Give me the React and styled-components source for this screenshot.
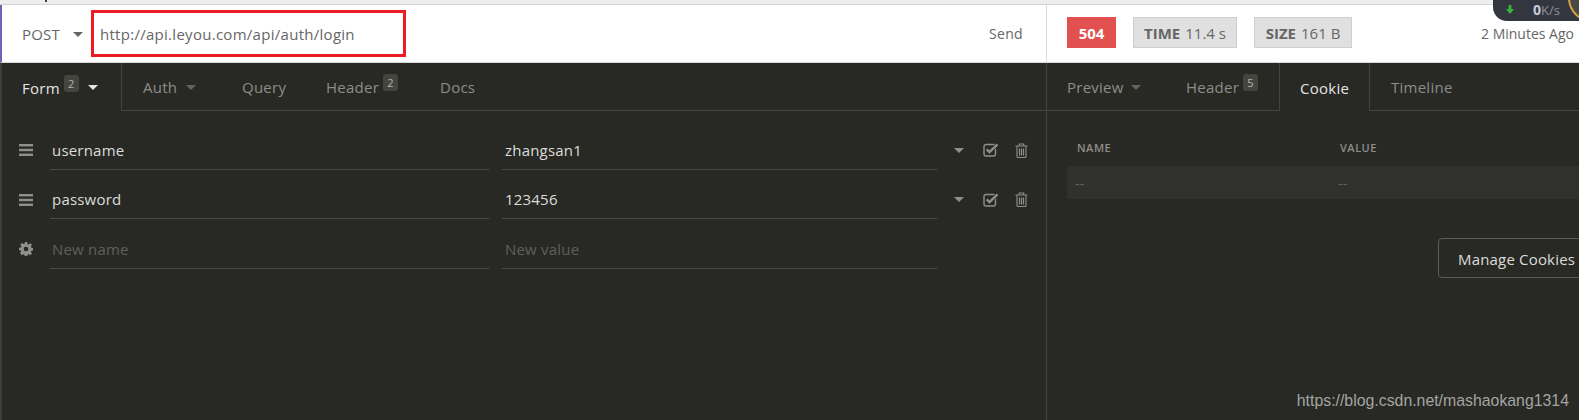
import React from "react";
import styled, { createGlobalStyle } from "styled-components";

const Global = createGlobalStyle`
  html, body { margin: 0; padding: 0; background: #282925; }
  body { font-family: "Open Sans", "Liberation Sans", sans-serif; }
  * { box-sizing: border-box; }
`;
const Page = styled.div`
  position: relative; width: 1579px; height: 420px; overflow: hidden; background: #282925;
  display: flex; flex-direction: column;
`;
const Strip = styled.div`
  height: 5px; flex: none; background: #eeeeee; border-bottom: 1px solid #d4d4d4;
`;
const Speck = styled.div`
  position: absolute; top: 0; left: 45px; width: 2px; height: 2px; background: #3a3a50;
`;
const TopBar = styled.div`
  height: 58px; flex: none; display: flex; background: #fff; border-left: 2px solid #7461b8;
  border-bottom: 1px solid #d8d8d8;
`;
const RequestBar = styled.div`
  width: 1045px; flex: none; display: flex; align-items: center; border-right: 1px solid #dcdcdc;
`;
const Method = styled.div`
  width: 89px; flex: none; display: flex; align-items: center; padding: 1px 0 0 20px;
  font-size: 15px; color: #666; letter-spacing: 0.2px;
`;
const Caret = styled.span`
  display: inline-block; width: 0; height: 0; flex: none;
  border-left: 5px solid transparent; border-right: 5px solid transparent;
  border-top: 5px solid ${p => p.$color || "#666"}; margin-left: ${p => p.$ml ?? 13}px;
`;
const UrlBox = styled.div`
  width: 315px; height: 47px; flex: none; border: 3px solid #ed1c24; display: flex; align-items: center;
  padding-left: 6px; font-size: 15px; color: #666; letter-spacing: 0.28px;
`;
const Send = styled.div`
  margin-left: auto; margin-right: 23px; font-size: 14px; color: #666; letter-spacing: 0.35px;
`;
const ResponseBar = styled.div`
  flex: 1; display: flex; align-items: center; padding-left: 20px; padding-bottom: 2px; min-width: 0;
`;
const Status = styled.div`
  width: 49px; height: 31px; background: #e25050; color: #fff; font-size: 15px; font-weight: 700;
  display: flex; align-items: center; justify-content: center;
`;
const Stat = styled.div`
  height: 31px; background: #e0e0e0; border: 1px solid #cfcfcf; color: #666; font-size: 15px;
  display: flex; align-items: center; gap: 5px; justify-content: center;
  width: ${p => p.$w}px; margin-left: ${p => p.$ml}px;
  b { font-weight: 700; }
`;
const Ago = styled.div`
  margin-left: auto; margin-right: 5px; padding-top: 2px; font-size: 14px; color: #666; white-space: nowrap;
`;
const Body = styled.div`
  flex: 1; display: flex; min-height: 0; border-left: 2px solid #3c3d39;
`;
const LeftPane = styled.div`
  width: 1045px; flex: none; border-right: 1px solid #44453f;
`;
const RightPane = styled.div`
  flex: 1; min-width: 0; position: relative;
`;
const Tabs = styled.div`
  height: 48px; display: flex; border-bottom: 1px solid #44453f;
`;
const Tab = styled.div`
  height: ${p => p.$active ? "48px" : "47px"}; display: flex; align-items: center; width: ${p => p.$w}px; flex: none;
  padding: 1px 0 0 ${p => p.$pl ?? 20}px; font-size: 15px; letter-spacing: 0.25px;
  color: ${p => p.$active ? "#e4e4e2" : "#8d8d89"};
  background: #282925;
  border-right: ${p => p.$edge ? "1px solid #44453f" : "none"};
  border-left: ${p => p.$left ? "1px solid #44453f" : "none"};
`;
const Badge = styled.span`
  display: inline-flex; align-items: center; justify-content: center; width: 15px; height: 17px;
  border-radius: 3px; background: #44453f; color: #b4b4b0; font-size: 11px; margin: -9px 0 0 4px;
`;
const Rows = styled.div`
  padding-top: 9px;
`;
const Row = styled.div`
  height: 49.5px; display: flex; padding-left: 17px;
`;
const Handle = styled.div`
  width: 14px; flex: none; display: flex; align-items: center; color: #8f8f8b; padding-top: 11px;
`;
const Field = styled.div`
  display: flex; align-items: center; width: ${p => p.$w}px; margin-left: ${p => p.$ml}px;
  flex: none; padding: 11px 0 0 ${p => p.$pl}px; border-bottom: 1px solid #4a4b46; font-size: 15px; letter-spacing: 0.2px;
  color: ${p => p.$ph ? "#5f605b" : "#dcdcd9"};
`;
const Icons = styled.div`
  display: flex; align-items: center; margin-left: 17px; padding-top: 11px; color: #8f8f8b;
`;
const IconSlot = styled.span`
  display: flex; margin-left: ${p => p.$ml}px;
`;
const CookieHead = styled.div`
  margin: 18px 0 0 20px; display: flex; height: 37px; align-items: center; padding-left: 10px;
  font-size: 11px; font-weight: 600; color: #8d8d89; letter-spacing: 0.5px;
`;
const CookieRow = styled.div`
  margin-left: 20px; display: flex; height: 33px; align-items: center; padding: 1px 0 0 8px;
  background: #30312d; color: #5f605b; font-size: 15px;
`;
const Cell = styled.div`
  width: 263px; flex: none;
`;
const Manage = styled.div`
  margin: 39px 0 0 391px; width: 180px; height: 40px; border: 1px solid #5a5b56; border-radius: 4px;
  display: flex; align-items: center; padding: 1px 0 0 19px; font-size: 15px; color: #dcdcd9;
  white-space: nowrap; letter-spacing: 0.18px;
`;
const Watermark = styled.div`
  position: absolute; right: 10px; bottom: 10px; font-family: "Liberation Sans", sans-serif;
  font-size: 15.85px; color: #a4a4a1;
`;
const Speed = styled.div`
  position: absolute; top: -10px; right: -6px; width: 92px; height: 31px; background: #34363f;
  border-radius: 0 0 0 14px; display: flex; align-items: center; padding: 8px 0 0 13px;
  font: 700 14px "Open Sans", sans-serif; color: #c6cbd8;
  span { font-weight: 400; color: #8c909c; font-size: 13px; }
`;
const SpeedArrow = styled.span`
  display: flex; margin-right: 19px;
`;
const Ring = styled.div`
  position: absolute; top: -26px; right: -37px; width: 48px; height: 48px; border-radius: 50%;
  background: #4a4a44; border: 2px solid #d8a040;
`;

const Bars = () => (
  <svg width="14" height="12" viewBox="0 0 14 12" fill="currentColor">
    <rect y="0" width="14" height="2.4" /><rect y="4.8" width="14" height="2.4" /><rect y="9.6" width="14" height="2.4" />
  </svg>
);
const Gear = () => (
  <svg width="14" height="14" viewBox="0 0 14 14" fill="currentColor">
    <path fillRule="evenodd" d="M5.8 0h2.4l.3 1.9 1.2.5 1.6-1.1 1.7 1.7-1.1 1.6.5 1.2 1.9.3v2.4l-1.9.3-.5 1.2 1.1 1.6-1.7 1.7-1.6-1.1-1.2.5-.3 1.9H5.8l-.3-1.9-1.2-.5-1.6 1.1L1 11l1.1-1.6-.5-1.2L0 8.2V5.8l1.9-.3.5-1.2L1.3 2.7 3 1l1.6 1.1 1.2-.5zM7 4.7a2.3 2.3 0 1 0 0 4.6 2.3 2.3 0 0 0 0-4.6z" />
  </svg>
);
const Check = () => (
  <svg width="16" height="14" viewBox="0 0 16 14" fill="none" stroke="currentColor">
    <rect x="1" y="1.5" width="11.5" height="11.5" rx="2" strokeWidth="1.4" />
    <path d="M3.8 6.3l2.7 2.8L14.5 1.3" strokeWidth="3.8" stroke="#282925" />
    <path d="M3.8 6.3l2.7 2.8L14.5 1.3" strokeWidth="2.4" />
  </svg>
);
const Trash = () => (
  <svg width="13" height="15" viewBox="0 0 13 15" fill="none" stroke="currentColor" strokeWidth="1.1">
    <path d="M0.5 3h12M4.3 3V1h4.4v2M2 3v10.5a1 1 0 0 0 1 1h7a1 1 0 0 0 1-1V3" />
    <path d="M4.5 5.5v7M6.5 5.5v7M8.5 5.5v7" strokeWidth="1.2" />
  </svg>
);
const Arrow = () => (
  <svg width="8" height="9" viewBox="0 0 8 9" fill="#3cb43c"><path d="M2.6 0h2.8v4H8L4 9 0 4h2.6z" /></svg>
);

const ParamRow = ({ icon, name, value, placeholder }) => (
  <Row>
    <Handle>{icon}</Handle>
    <Field $w={439} $ml={17} $pl={2} $ph={placeholder}>{name}</Field>
    <Field $w={435} $ml={13} $pl={3} $ph={placeholder}>{value}</Field>
    {!placeholder && (
      <Icons>
        <Caret $color="#8f8f8b" $ml={0} />
        <IconSlot $ml={19}><Check /></IconSlot>
        <IconSlot $ml={16}><Trash /></IconSlot>
      </Icons>
    )}
  </Row>
);

export default function App() {
  return (
    <Page>
      <Global />
      <Strip />
      <Speck />
      <TopBar>
        <RequestBar>
          <Method>POST<Caret /></Method>
          <UrlBox>http://api.leyou.com/api/auth/login</UrlBox>
          <Send>Send</Send>
        </RequestBar>
        <ResponseBar>
          <Status>504</Status>
          <Stat $w={104} $ml={17}><b>TIME</b> 11.4 s</Stat>
          <Stat $w={98} $ml={17}><b>SIZE</b> 161 B</Stat>
          <Ago>2 Minutes Ago</Ago>
        </ResponseBar>
      </TopBar>
      <Body>
        <LeftPane>
          <Tabs>
            <Tab $active $w={120} $edge>Form<Badge>2</Badge><Caret $color="#e4e4e2" $ml={9} /></Tab>
            <Tab $w={99} $pl={21}>Auth<Caret $color="#62635e" $ml={9} /></Tab>
            <Tab $w={85} $pl={21}>Query</Tab>
            <Tab $w={114}>Header<Badge>2</Badge></Tab>
            <Tab $w={100}>Docs</Tab>
          </Tabs>
          <Rows>
            <ParamRow icon={<Bars />} name="username" value="zhangsan1" />
            <ParamRow icon={<Bars />} name="password" value="123456" />
            <ParamRow icon={<Gear />} name="New name" value="New value" placeholder />
          </Rows>
        </LeftPane>
        <RightPane>
          <Tabs>
            <Tab $w={119}>Preview<Caret $color="#62635e" $ml={7} /></Tab>
            <Tab $w={113}>Header<Badge>5</Badge></Tab>
            <Tab $active $w={91} $left $edge>Cookie</Tab>
            <Tab $w={100} $pl={21}>Timeline</Tab>
          </Tabs>
          <CookieHead><Cell>NAME</Cell><Cell>VALUE</Cell></CookieHead>
          <CookieRow><Cell>--</Cell><Cell>--</Cell></CookieRow>
          <Manage>Manage Cookies</Manage>
        </RightPane>
      </Body>
      <Speed><SpeedArrow><Arrow /></SpeedArrow>0<span>K/s</span></Speed>
      <Ring />
      <Watermark>https://blog.csdn.net/mashaokang1314</Watermark>
    </Page>
  );
}
